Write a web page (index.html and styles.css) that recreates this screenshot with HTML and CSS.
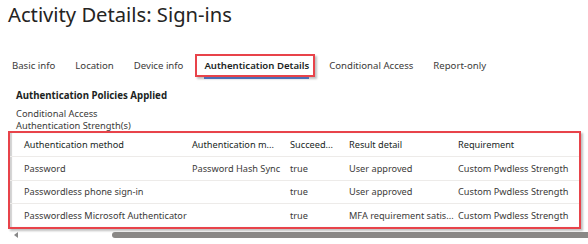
FILE: index.html
```html
<!DOCTYPE html>
<html lang="en">
<head>
    <meta charset="UTF-8">
    <title>Activity Details: Sign-ins</title>
    <link rel="stylesheet" href="styles.css">
</head>
<body>
    <h1 class="page-title">Activity Details: Sign-ins</h1>

    <!-- Tabs -->
    <nav class="tabs">
        <span class="tab">Basic info</span>
        <span class="tab">Location</span>
        <span class="tab">Device info</span>
        <span class="tab tab-active">Authentication Details</span>
        <span class="tab">Conditional Access</span>
        <span class="tab">Report-only</span>
    </nav>

    <!-- Policies -->
    <div class="policies">
        <h2 class="policies-title">Authentication Policies Applied</h2>
        <p class="policies-line">Conditional Access</p>
        <p class="policies-line">Authentication Strength(s)</p>
    </div>

    <!-- Table -->
    <div class="grid-box">
        <div class="grid-row grid-head">
            <span>Authentication method</span>
            <span>Authentication m...</span>
            <span>Succeed...</span>
            <span>Result detail</span>
            <span>Requirement</span>
        </div>
        <div class="grid-row">
            <span>Password</span>
            <span>Password Hash Sync</span>
            <span>true</span>
            <span>User approved</span>
            <span>Custom Pwdless Strength</span>
        </div>
        <div class="grid-row">
            <span>Passwordless phone sign-in</span>
            <span></span>
            <span>true</span>
            <span>User approved</span>
            <span>Custom Pwdless Strength</span>
        </div>
        <div class="grid-row">
            <span>Passwordless Microsoft Authenticator</span>
            <span></span>
            <span>true</span>
            <span>MFA requirement satis...</span>
            <span>Custom Pwdless Strength</span>
        </div>
    </div>

    <div class="scrollbar">
        <span class="scroll-arrow"></span>
        <span class="scroll-thumb"></span>
    </div>
</body>
</html>
```

FILE: styles.css
```css
* {
    margin: 0;
    padding: 0;
    box-sizing: border-box;
}

body {
    font-family: "Noto Sans", "Open Sans", sans-serif;
    background: #fff;
    color: #323130;
    width: 588px;
    height: 244px;
    overflow: hidden;
}

.page-title {
    font-size: 20.2px;
    font-weight: 400;
    line-height: 26px;
    padding: 1px 0 0 8px;
    color: #252423;
}

/* Tabs */
.tabs {
    display: flex;
    align-items: center;
    margin-top: 27px;
    padding-left: 12px;
    font-size: 9.6px;
    color: #3b3a39;
}

.tab {
    line-height: 19px;
    margin-right: 20px;
}

.tab-active {
    font-weight: 600;
    color: #201f1e;
    border: 2px solid #e8434a;
    box-shadow: 2px 2px 2px rgba(0, 0, 0, 0.25);
    padding: 0 4px 0 7px;
    margin-left: -8px;
    margin-right: 14px;
    position: relative;
}

.tab-active::after {
    content: '';
    position: absolute;
    left: 7px;
    right: 4px;
    bottom: -4px;
    height: 2px;
    background: #4b6eb5;
}

/* Policies */
.policies {
    padding: 12px 0 0 16px;
    font-size: 9.3px;
    color: #3b3a39;
}

.policies-title {
    font-size: 9.7px;
    font-weight: 700;
    color: #201f1e;
    line-height: 14px;
    margin-bottom: 5px;
}

.policies-line {
    line-height: 12px;
}

/* Table */
.grid-box {
    margin: -1px 7px 0 8px;
    border: 2px solid #e8434a;
    box-shadow: 2px 2px 2px rgba(0, 0, 0, 0.25), inset 2px 0 1px rgba(0, 0, 0, 0.18);
    font-size: 9.2px;
    color: #3b3a39;
}

.grid-row {
    display: grid;
    grid-template-columns: 168px 98px 59px 109px 1fr;
    align-items: center;
    height: 23.5px;
    padding-left: 14px;
    border-top: 1px solid #edebe9;
    white-space: nowrap;
}

.grid-head {
    border-top: none;
    height: 23px;
    color: #201f1e;
}

/* Scrollbar */
.scrollbar {
    display: flex;
    align-items: center;
    height: 8px;
    margin-top: 2px;
    padding-left: 14px;
}

.scroll-arrow {
    width: 0;
    height: 0;
    border-top: 3px solid transparent;
    border-bottom: 3px solid transparent;
    border-right: 4px solid #888;
}

.scroll-thumb {
    margin-left: 94px;
    flex: 1;
    height: 6px;
    background: #8a8886;
    border-radius: 3px 0 0 3px;
}
```
